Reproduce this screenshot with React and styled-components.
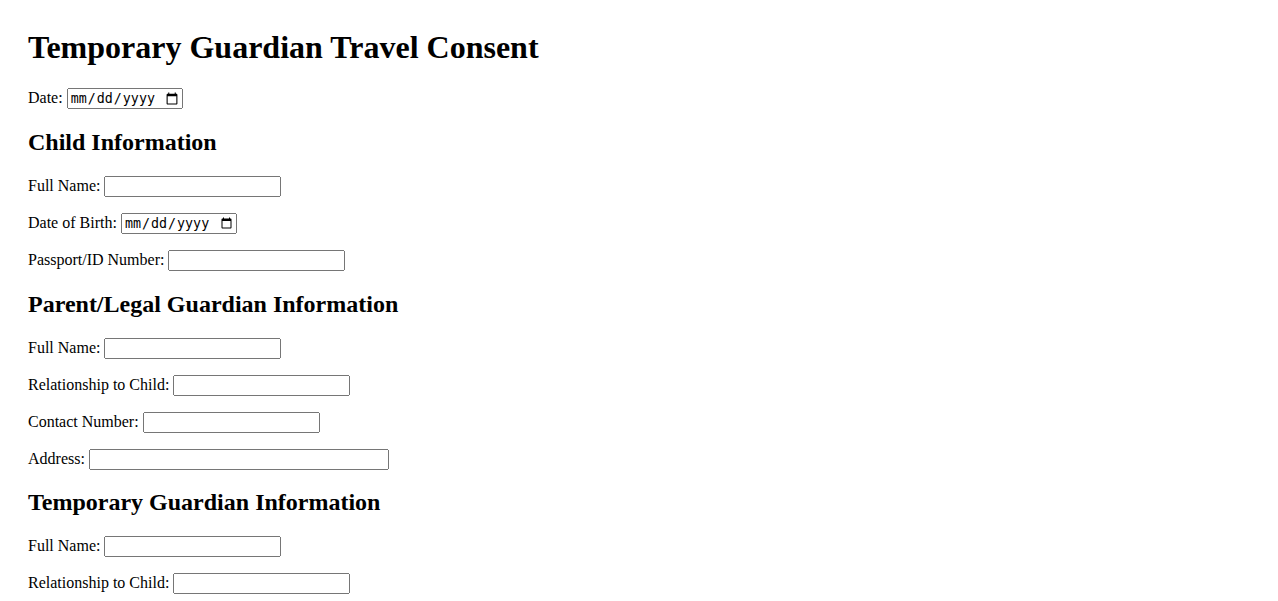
import styled, { createGlobalStyle } from 'styled-components'

const GlobalStyle = createGlobalStyle`
	body {
		margin: 0;
		background: #fff;
		color: #000;
		font-family: 'Liberation Serif', 'Times New Roman', serif;
		font-size: 16px;
	}
`

const Page = styled.form`
	padding: 8px 28px;
`

const Title = styled.h1`
	font-size: 32px;
	font-weight: bold;
	margin: 21.44px 0;
`

const SectionTitle = styled.h2`
	font-size: 24px;
	font-weight: bold;
	margin: 19.92px 0;
`

const Row = styled.div`
	margin-bottom: 16px;
`

const Field = styled.input`
	font-family: 'Liberation Sans', Arial, sans-serif;
	font-size: 13.333px;
	box-sizing: border-box;
	height: 21px;
	width: ${props => (props.$wide ? '300px' : '177px')};
`

const DateField = styled.input.attrs({ type: 'date' })`
	font-size: 13.333px;
	box-sizing: border-box;
	height: 21px;
	width: 116px;
`

function TextRow({ label, wide }) {
	return (
		<Row>
			<label>{label}: </label>
			<Field type="text" $wide={wide} />
		</Row>
	)
}

function DateRow({ label }) {
	return (
		<Row>
			<label>{label}: </label>
			<DateField />
		</Row>
	)
}

export default function App() {
	return (
		<>
			<GlobalStyle />
			<Page>
				<Title>Temporary Guardian Travel Consent</Title>
				<DateRow label="Date" />

				<SectionTitle>Child Information</SectionTitle>
				<TextRow label="Full Name" />
				<DateRow label="Date of Birth" />
				<TextRow label="Passport/ID Number" />

				<SectionTitle>Parent/Legal Guardian Information</SectionTitle>
				<TextRow label="Full Name" />
				<TextRow label="Relationship to Child" />
				<TextRow label="Contact Number" />
				<TextRow label="Address" wide />

				<SectionTitle>Temporary Guardian Information</SectionTitle>
				<TextRow label="Full Name" />
				<TextRow label="Relationship to Child" />
			</Page>
		</>
	)
}
